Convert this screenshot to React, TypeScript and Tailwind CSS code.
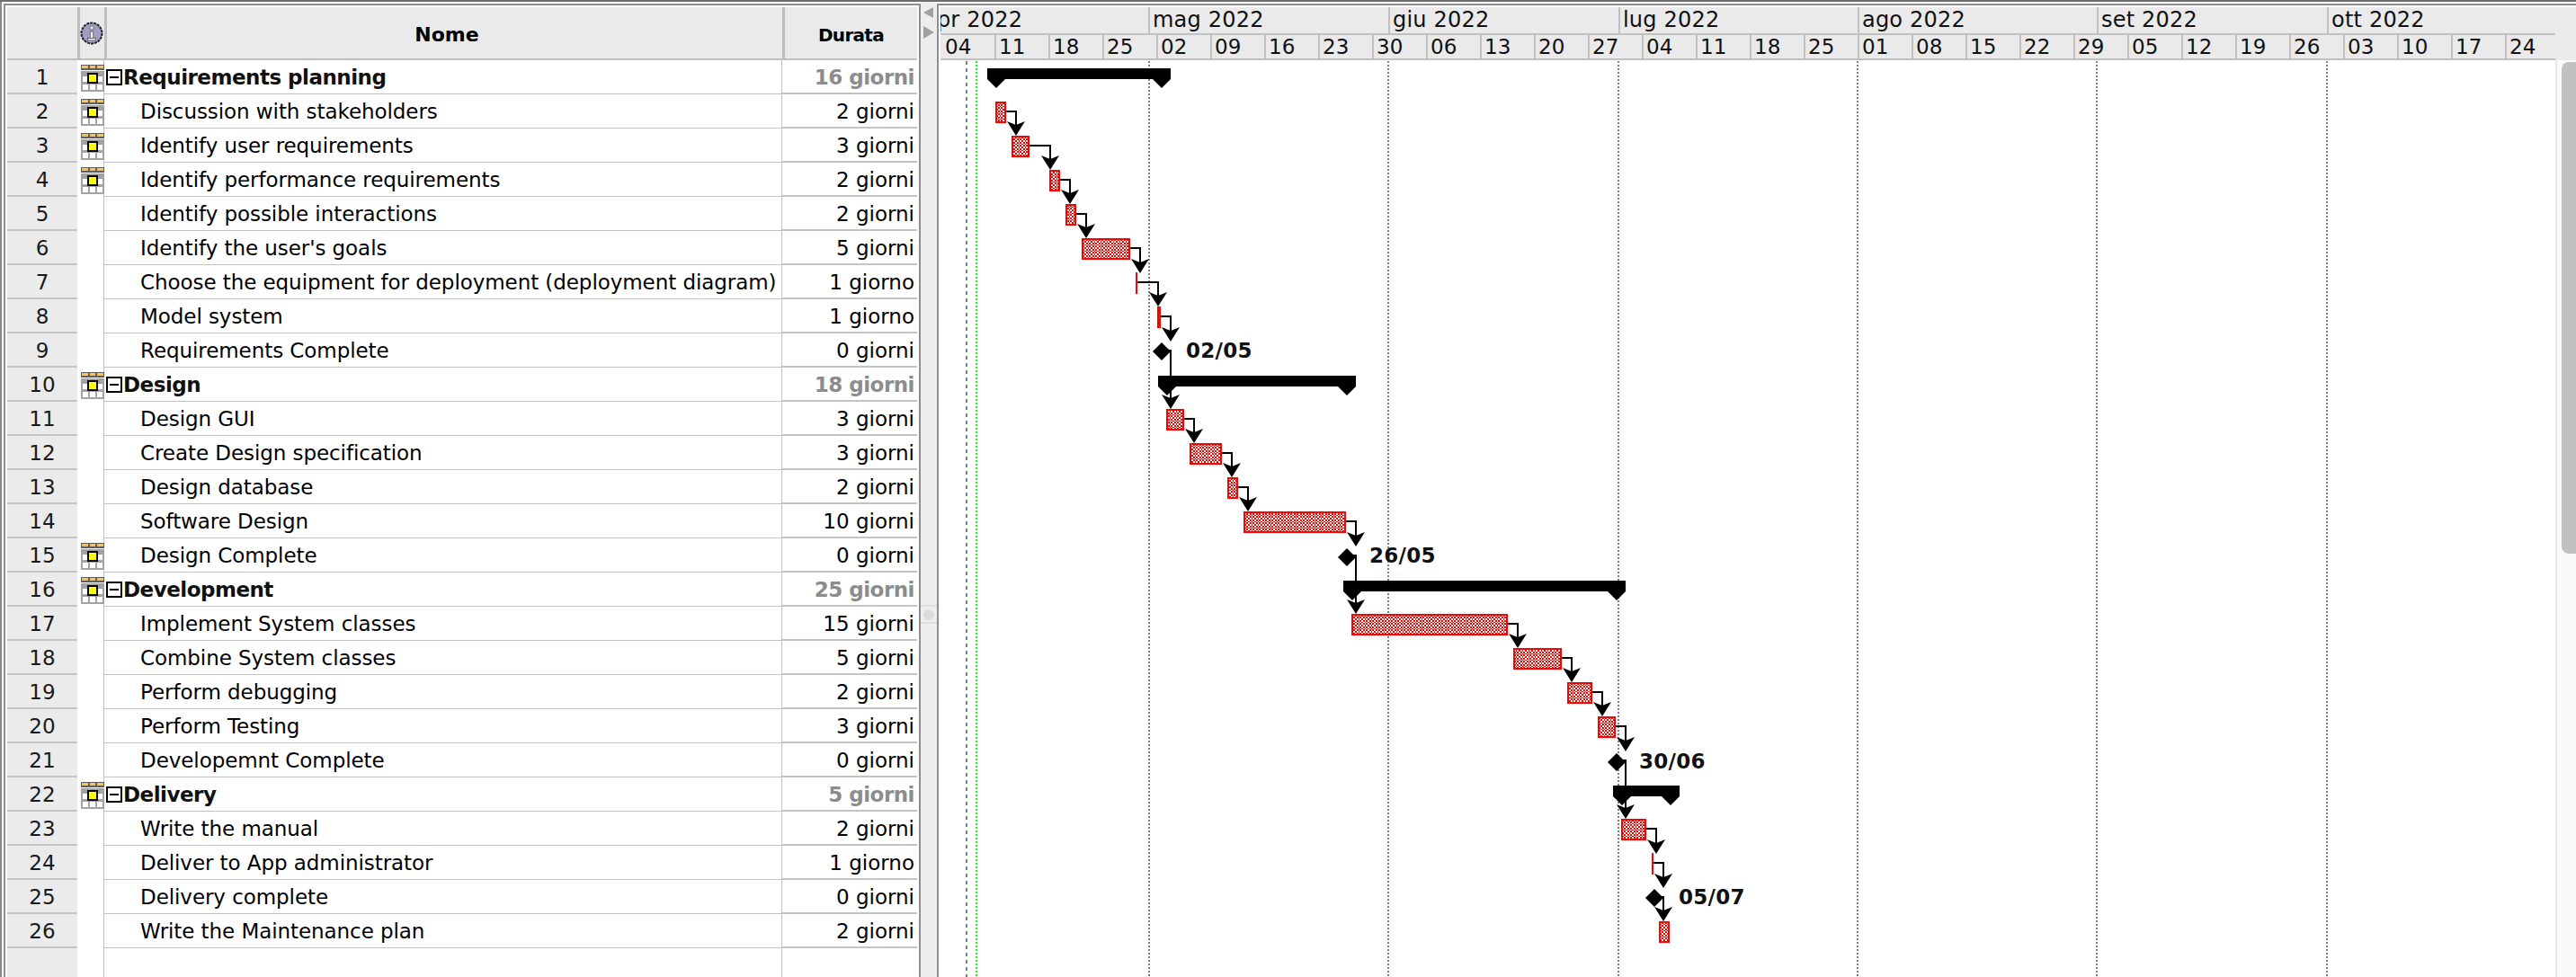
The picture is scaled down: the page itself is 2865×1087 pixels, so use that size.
import React from "react";

type Row = { n: number; name: string; dur: string; icon?: boolean; sum?: boolean };

const rows: Row[] = [
  { n: 1, name: "Requirements planning", dur: "16 giorni", icon: true, sum: true },
  { n: 2, name: "Discussion with stakeholders", dur: "2 giorni", icon: true },
  { n: 3, name: "Identify user requirements", dur: "3 giorni", icon: true },
  { n: 4, name: "Identify performance requirements", dur: "2 giorni", icon: true },
  { n: 5, name: "Identify possible interactions", dur: "2 giorni" },
  { n: 6, name: "Identify the user's goals", dur: "5 giorni" },
  { n: 7, name: "Choose the equipment for deployment (deployment diagram)", dur: "1 giorno" },
  { n: 8, name: "Model system", dur: "1 giorno" },
  { n: 9, name: "Requirements Complete", dur: "0 giorni" },
  { n: 10, name: "Design", dur: "18 giorni", icon: true, sum: true },
  { n: 11, name: "Design GUI", dur: "3 giorni" },
  { n: 12, name: "Create Design specification", dur: "3 giorni" },
  { n: 13, name: "Design database", dur: "2 giorni" },
  { n: 14, name: "Software Design", dur: "10 giorni" },
  { n: 15, name: "Design Complete", dur: "0 giorni", icon: true },
  { n: 16, name: "Development", dur: "25 giorni", icon: true, sum: true },
  { n: 17, name: "Implement System classes", dur: "15 giorni" },
  { n: 18, name: "Combine System classes", dur: "5 giorni" },
  { n: 19, name: "Perform debugging", dur: "2 giorni" },
  { n: 20, name: "Perform Testing", dur: "3 giorni" },
  { n: 21, name: "Developemnt Complete", dur: "0 giorni" },
  { n: 22, name: "Delivery", dur: "5 giorni", icon: true, sum: true },
  { n: 23, name: "Write the manual", dur: "2 giorni" },
  { n: 24, name: "Deliver to App administrator", dur: "1 giorno" },
  { n: 25, name: "Delivery complete", dur: "0 giorni" },
  { n: 26, name: "Write the Maintenance plan", dur: "2 giorni" },
];

const weeks = ["04","11","18","25","02","09","16","23","30","06","13","20","27","04","11","18","25","01","08","15","22","29","05","12","19","26","03","10","17","24"];

// [x0, x1, y]
const tasks = [
  [1107,1119,113],[1125,1145,151],[1167,1179,189],[1185,1197,227],[1203,1257,265],
  [1297,1317,455],[1323,1359,493],[1365,1377,531],[1383,1497,569],
  [1503,1677,683],[1683,1737,721],[1743,1771,759],[1777,1797,797],
  [1803,1831,911],[1845,1857,1025],
];
const slivers = [[1263,2,303],[1287,4,341],[1837,2,949]];
const summaries = [[1098,1302,76],[1288,1508,418],[1494,1808,646],[1794,1868,874]];
const milestones = [[1292,391],[1498,620],[1798,848],[1840,999]];
// [startX, startY, x, tipY]
const links = [
  [1119,124,1130,151],[1145,162,1168,189],[1179,200,1190,227],[1197,238,1208,265],
  [1257,276,1268,304],[1265,314,1288,341],[1291,352,1302,380],[1296,390,1302,455],
  [1317,466,1328,493],[1359,504,1370,531],[1377,542,1388,569],[1497,580,1508,608],
  [1502,618,1508,683],[1677,694,1688,721],[1737,732,1748,759],[1771,770,1782,797],
  [1797,808,1808,836],[1802,846,1808,911],[1831,922,1842,950],[1839,960,1850,988],
  [1846,998,1850,1025],
];

// uneven checker cells: the reference's hatch is a resampled checker
const cellStart = [0, 2, 4, 6];
const cellSize = [2, 2, 2, 1];

function TaskIcon() {
  return (
    <svg width="26" height="30" viewBox="0 0 26 30" shapeRendering="crispEdges" className="block">
      <rect width="26" height="30" fill="#a3a3a3" />
      <rect x="2" y="13" width="6" height="6" fill="#fff" />
      <rect x="10" y="22" width="6" height="6" fill="#fff" />
      <rect x="2" y="22" width="6" height="6" fill="#fff" />
      <rect x="18" y="22" width="6" height="6" fill="#fff" />
      <rect x="18" y="13" width="6" height="6" fill="#fff" />
      <rect width="26" height="6" fill="#5e5e5e" />
      <rect y="1" x="1" width="7" height="3" fill="#ffc04d" />
      <rect y="1" x="10" width="6" height="3" fill="#ffc04d" />
      <rect y="1" x="18" width="7" height="3" fill="#ffc04d" />
      <rect y="6" width="26" height="1" fill="#fff" />
      <rect x="7" y="9" width="12" height="12" fill="#000" />
      <rect x="9" y="11" width="8" height="8" fill="#ffff00" />
    </svg>
  );
}

function InfoIcon() {
  return (
    <svg width="26" height="28" viewBox="0 0 26 28" className="block">
      <circle cx="13" cy="14" r="11.5" fill="#a09ec2" stroke="#222" strokeWidth="2" strokeDasharray="3 1" />
      <circle cx="13" cy="8" r="2.2" fill="#eeeef4" stroke="#555" strokeWidth="0.8" />
      <rect x="11.2" y="12" width="3.6" height="8" fill="#eeeef4" stroke="#555" strokeWidth="0.8" />
      <rect x="8.5" y="19.5" width="9" height="2.5" fill="#eeeef4" stroke="#555" strokeWidth="0.8" />
    </svg>
  );
}

function Chart() {
  return (
    <svg width="1796" height="1020" viewBox="1046 67 1796 1020" className="block">
      <defs>
        <pattern id="chk" width="7" height="7" patternUnits="userSpaceOnUse">
          <rect width="7" height="7" fill="#fff" />
          {cellStart.map((cx, i) =>
            cellStart.map((cy, j) =>
              (i + j) % 2 === 0 ? (
                <rect key={`${i}-${j}`} x={cx} y={cy} width={cellSize[i]} height={cellSize[j]} fill="#ff0000" />
              ) : null
            )
          )}
        </pattern>
      </defs>
      <g shapeRendering="crispEdges">
        <line x1="1075" y1="68" x2="1075" y2="1087" stroke="#7f7f7f" strokeWidth="2" strokeDasharray="4 4" />
        <line x1="1086" y1="68" x2="1086" y2="1087" stroke="#00ff00" strokeWidth="2" strokeDasharray="2 2" />
        {[1278,1544,1800,2066,2332,2588].map((x) => (
          <line key={x} x1={x} y1="68" x2={x} y2="1087" stroke="#7f7f7f" strokeWidth="2" strokeDasharray="2 2" />
        ))}
        {tasks.map(([a,b,y]) => (
          <rect key={a} x={a+1} y={y+1} width={b-a-2} height="22" fill="url(#chk)" stroke="#ff0000" strokeWidth="2" />
        ))}
        {slivers.map(([x,w,y]) => (
          <rect key={x} x={x} y={y} width={w} height="24" fill="#ff0000" />
        ))}
        {summaries.map(([a,b,y]) => (
          <rect key={a} x={a} y={y} width={b-a} height="12" fill="#000" />
        ))}
      </g>
      {summaries.map(([a,b,y]) => (
        <g key={a}>
          <polygon points={`${a},${y+12} ${a+10},${y+22} ${a+20},${y+12}`} fill="#000" />
          <polygon points={`${b-20},${y+12} ${b-10},${y+22} ${b},${y+12}`} fill="#000" />
        </g>
      ))}
      {milestones.map(([x,y]) => (
        <polygon key={x} points={`${x-10},${y} ${x},${y-10} ${x+10},${y} ${x},${y+10}`} fill="#000" />
      ))}
      {links.map(([sx,sy,x,t]) => (
        <g key={`${sx}-${sy}`}>
          <path d={`M${sx} ${sy}H${x}V${t-8}`} fill="none" stroke="#000" strokeWidth="2" />
          <polygon points={`${x-10},${t-16} ${x},${t-12} ${x+10},${t-16} ${x},${t}`} fill="#000" />
        </g>
      ))}
    </svg>
  );
}

const labelCls = "absolute font-bold text-[23px] leading-[30px] text-[#111] tracking-[0.3px]";

export default function App() {
  return (
    <div className="flex flex-col w-[2865px] h-[1087px] overflow-hidden bg-white text-[23px] text-black font-['DejaVu_Sans',sans-serif]">
      <div className="h-[2px] bg-[#6e6e6e] shrink-0" />
      <div className="flex flex-1 min-h-0">
        {/* table panel */}
        <div className="w-[1024px] shrink-0 border-l-2 border-[#8a8a8a] pl-[2px] pt-[2px] bg-white">
          <div className="h-full border-l-2 border-r-2 border-t-2 border-[#8f8f8f] pl-[2px] pr-[2px] pt-[2px] flex flex-col">
            <div className="flex h-[59px] shrink-0 bg-[#bfbfbf] pb-[2px]">
              <div className="w-[78px] bg-[#eaeaea]" />
              <div className="w-[27px] ml-[3px] bg-[#eaeaea] flex items-center justify-start pt-[1px]"><InfoIcon /></div>
              <div className="w-[751px] ml-[3px] bg-[#eaeaea] flex items-center justify-center font-bold text-[22px] pt-[4px] pl-[5px]">Nome</div>
              <div className="w-[147px] ml-[3px] bg-[#eaeaea] flex items-center justify-center font-bold text-[20px] tracking-[-0.7px] pt-[4px]">Durata</div>
            </div>
            {rows.map((r) => (
              <div key={r.n} className="flex h-[38px] shrink-0">
                <div className="w-[78px] bg-[#ebebeb] border-b-2 border-[#c4c4c4] flex items-center justify-center text-[#1a1a1a] pt-[2px]">{r.n}</div>
                <div className="w-[30px] pl-[4px] pt-[5px] border-r border-[#c0c0c0]">
                  {r.icon && <TaskIcon />}
                </div>
                <div className="w-[754px] border-b border-[#c4c4c4] border-r flex items-center whitespace-nowrap overflow-hidden">
                  {r.sum ? (
                    <>
                      <span className="ml-[2px] w-[18px] h-[18px] border-2 border-black flex items-center justify-center shrink-0">
                        <span className="w-[10px] h-[2px] bg-black" />
                      </span>
                      <span className="font-bold ml-[1px] text-[#111] tracking-[-0.5px] pt-[2px]">{r.name}</span>
                    </>
                  ) : (
                    <span className="ml-[40px] tracking-[-0.07px] pt-[2px]">{r.name}</span>
                  )}
                </div>
                <div className={`w-[150px] border-b-2 border-[#c4c4c4] flex items-center justify-end pr-[3px] pt-[2px] whitespace-nowrap ${r.sum ? "font-bold text-[#8c8c8c] tracking-[-0.5px]" : ""}`}>
                  {r.dur}
                </div>
              </div>
            ))}
            <div className="flex flex-1">
              <div className="w-[78px] bg-[#ebebeb]" />
              <div className="w-[30px] border-r border-[#c0c0c0]" />
              <div className="w-[754px] border-r border-[#c0c0c0]" />
            </div>
          </div>
        </div>

        {/* splitter */}
        <div className="w-[18px] shrink-0 bg-[#eeeeee] flex flex-col items-center">
          <svg width="14" height="36" viewBox="0 0 14 36" className="block mt-[5px]">
            <polygon points="12,1 12,13 1,7" fill="#a0a0a0" />
            <polygon points="1,22 1,36 13,29" fill="#a0a0a0" />
          </svg>
          <div className="mt-[630px] w-full h-[21px] border-y-2 border-[#dedede] flex items-center justify-center">
            <div className="w-[12px] h-[12px] rounded-full bg-[#dcdcdc]" />
          </div>
        </div>

        {/* gantt panel */}
        <div className="flex-1 min-w-0 flex flex-col pt-[2px]">
          <div className="flex-1 min-h-0 border-l-2 border-t-2 border-[#8f8f8f] pl-[2px] pt-[2px] flex flex-col">
            <div className="shrink-0 bg-[#eaeaea] text-[#111] whitespace-nowrap">
              <div className="flex h-[29px] w-[1796px] overflow-hidden leading-[29px] text-[24px] tracking-[0.2px]">
                <div className="w-[231px] overflow-hidden"><span className="block -ml-[19px]">apr 2022</span></div>
                {[["mag 2022","w-[267px]"],["giu 2022","w-[256px]"],["lug 2022","w-[266px]"],["ago 2022","w-[266px]"],["set 2022","w-[256px]"],["ott 2022","w-[254px]"]].map(([m,w]) => (
                  <div key={m} className={`${w} border-l-2 border-[#c0c0c0] pl-[3px]`}>{m}</div>
                ))}
              </div>
              <div className="flex h-[30px] w-[1796px] border-y-2 border-[#c0c0c0] leading-[26px]">
                {weeks.map((w, i) => (
                  <div key={i} className={`${i === 29 ? "w-[56px]" : "w-[60px]"} ${i === 0 ? "pl-[5px]" : "border-l-2 border-[#c0c0c0] pl-[3px]"}`}>{w}</div>
                ))}
              </div>
            </div>
            <div className="flex flex-1 min-h-0">
              <div className="relative w-[1796px] shrink-0 overflow-hidden">
                <Chart />
                <span className={`${labelCls} left-[273px] top-[308px]`}>02/05</span>
                <span className={`${labelCls} left-[477px] top-[536px]`}>26/05</span>
                <span className={`${labelCls} left-[777px] top-[765px]`}>30/06</span>
                <span className={`${labelCls} left-[821px] top-[916px]`}>05/07</span>
              </div>
              <div className="flex-1 bg-[#fafafa] border-l-2 border-[#e6e6e6] pl-[5px] pt-[2px]">
                <div className="w-[20px] h-[547px] bg-[#c1c1c1] rounded-l-[8px]" />
              </div>
            </div>
          </div>
        </div>
      </div>
    </div>
  );
}
